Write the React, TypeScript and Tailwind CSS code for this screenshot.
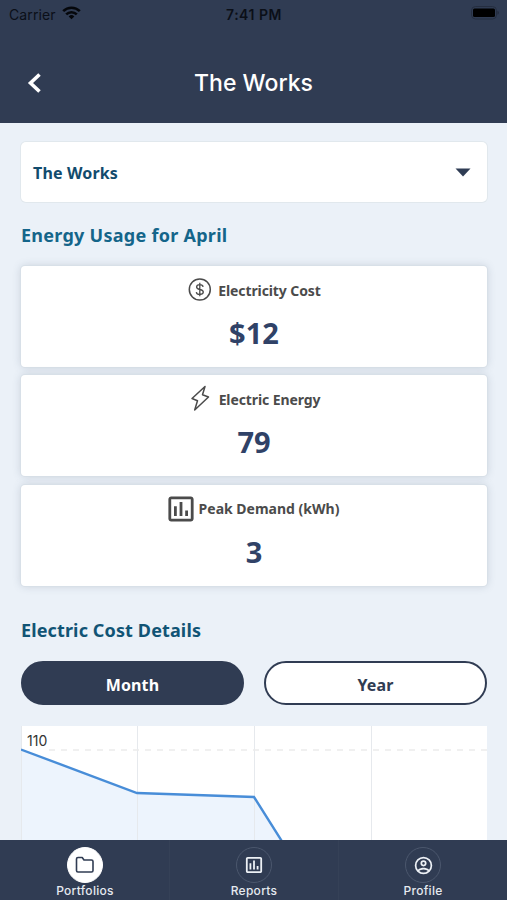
import { useState, type ReactNode } from "react";
import clsx from "clsx";

type Tab = "portfolios" | "reports" | "profile";
type Range = "month" | "year";

export default function App() {
  const [range, setRange] = useState<Range>("month");
  const [tab, setTab] = useState<Tab>("portfolios");

  return (
    <div className="flex h-[900px] w-[507px] flex-col overflow-hidden bg-[#ebf1f8] font-['Noto_Sans',sans-serif]">
      <Header title="The Works" />

      <main className="min-h-0 flex-1 overflow-hidden pt-[19px] pr-5 pl-[21px]">
        <button
          type="button"
          className="flex h-[60px] w-full items-center justify-between rounded-[5px] bg-white pt-px pr-4 pl-3 ring-1 ring-[#e1e8ed]"
        >
          <span className="text-[16px] font-bold tracking-[0.15px] text-[#114b6d]">The Works</span>
          <svg width="16" height="9" viewBox="0 0 16 9">
            <path d="M0.5 0.5h15L8 8.5z" fill="#2f3c54" />
          </svg>
        </button>

        <h2 className="mt-[19px] text-[18px] leading-7 font-bold tracking-[0.27px] text-[#14658a]">
          Energy Usage for April
        </h2>

        <div className="mt-[17px] flex flex-col gap-[8.4px]">
          <StatCard icon={<DollarIcon />} label="Electricity Cost" value="$12" />
          <StatCard icon={<BoltIcon />} label="Electric Energy" value="79" />
          <StatCard icon={<ChartBoxIcon size={28} />} label="Peak Demand (kWh)" value="3" wide />
        </div>

        <h2 className="mt-[30.2px] text-[18px] leading-7 font-bold tracking-[0.13px] text-[#115475]">
          Electric Cost Details
        </h2>

        <div className="mt-[17px] flex gap-5">
          <RangeButton active={range === "month"} onClick={() => setRange("month")}>
            Month
          </RangeButton>
          <RangeButton active={range === "year"} onClick={() => setRange("year")}>
            Year
          </RangeButton>
        </div>

        <CostChart />
      </main>

      <nav className="flex h-[60px] shrink-0 bg-[#303c53]">
        <NavItem label="Portfolios" active={tab === "portfolios"} onClick={() => setTab("portfolios")}>
          <FolderIcon />
        </NavItem>
        <NavItem label="Reports" active={tab === "reports"} onClick={() => setTab("reports")}>
          <ChartBoxIcon size={18} />
        </NavItem>
        <NavItem label="Profile" active={tab === "profile"} onClick={() => setTab("profile")}>
          <ProfileIcon />
        </NavItem>
      </nav>
    </div>
  );
}

function Header({ title }: { title: string }) {
  return (
    <header className="h-[123px] shrink-0 bg-[#303c53] font-['Inter',sans-serif]">
      <div className="grid h-7 grid-cols-3 items-center pr-2 pl-[9px] text-[14px] text-[#0b0f18]">
        <div className="flex items-center gap-[6px]">
          <span className="tracking-[0.1px]">Carrier</span>
          <svg className="-mt-[3px]" width="19" height="14" viewBox="0 0 19 14" fill="none" stroke="#05070b" strokeWidth="2.6">
            <path d="M1.2 5.2a11.8 11.8 0 0 1 16.6 0" />
            <path d="M4.2 8.4a7.5 7.5 0 0 1 10.6 0" />
            <path d="M9.5 13.2 6.7 10.4a4 4 0 0 1 5.6 0z" fill="#05070b" stroke="none" />
          </svg>
        </div>
        <span className="text-center text-[14px] font-semibold tracking-[0.5px]">7:41 PM</span>
        <svg className="-mt-[3px] justify-self-end" width="28" height="14" viewBox="0 0 28 14">
          <rect x="0.5" y="0.5" width="25" height="12.5" rx="4" fill="none" stroke="#252e40" />
          <rect x="2" y="2.5" width="22" height="8.5" rx="1.5" fill="#000" />
          <path d="M26.5 4.8v4a2.200 2.200 0 0 0 0-4z" fill="#202839" />
        </svg>
      </div>
      <div className="grid h-[111px] grid-cols-[100px_1fr_100px] items-center text-white">
        <button type="button" aria-label="Back" className="-mt-px pl-[27px]">
          <svg width="15" height="20" viewBox="0 0 15 20" fill="none" stroke="currentColor" strokeWidth="3.6">
            <path d="M12.500 1.500 3.500 10l9 8.500" />
          </svg>
        </button>
        <h1 className="text-center text-[23px] font-medium">{title}</h1>
      </div>
    </header>
  );
}

function StatCard({ icon, label, value, wide }: { icon: ReactNode; label: string; value: string; wide?: boolean }) {
  return (
    <section className="flex h-[101px] flex-col items-center rounded-[4px] bg-white pt-[9px] shadow-[0_0_8px_rgba(70,85,110,0.22)] ring-1 ring-[#d8e0e8]">
      <div className={clsx("flex h-[30px] items-center", wide ? "gap-1 pr-[2px]" : "gap-1")}>
        {icon}
        <span className={clsx("text-[14px] font-bold text-[#4b4b4b]", !wide && "tracking-[-0.1px]")}>{label}</span>
      </div>
      <div className="mt-2 text-[29px] leading-10 font-bold text-[#304267]">{value}</div>
    </section>
  );
}

function RangeButton({ active, onClick, children }: { active: boolean; onClick: () => void; children: ReactNode }) {
  return (
    <button
      type="button"
      onClick={onClick}
      className={clsx(
        "h-11 flex-1 rounded-full border-2 border-[#303c53] pt-1 text-[16px] font-bold tracking-[0.1px]",
        active ? "bg-[#303c53] text-white" : "bg-white text-[#303c53]",
      )}
    >
      {children}
    </button>
  );
}

function CostChart() {
  return (
    <svg className="mt-[21px] block bg-white" width="466" height="174" viewBox="0 0 466 174">
      <path d="M0 23.5 116 67 233 71 298 174H0z" fill="#edf4fd" />
      <path d="M0.5 0v174M116.5 0v174M233.5 0v174M350.5 0v174" stroke="#e6e9ed" />
      <path d="M28 24H466" stroke="#ebebeb" strokeWidth="1.5" strokeDasharray="6 6" />
      <path d="M0 23.5 116 67 233 71 298 174" fill="none" stroke="#488dd8" strokeWidth="2.4" />
      <text x="6" y="20" fontSize="14" fill="#333" className="font-['Inter',sans-serif]">
        110
      </text>
    </svg>
  );
}

function NavItem({
  label,
  active,
  onClick,
  children,
}: {
  label: string;
  active: boolean;
  onClick: () => void;
  children: ReactNode;
}) {
  return (
    <button
      type="button"
      onClick={onClick}
      className="flex flex-1 flex-col items-center border-l border-[#354157] pt-[7px] first:border-l-0 first:pl-px"
    >
      <span
        className={clsx(
          "flex size-9 items-center justify-center rounded-full border",
          active ? "border-white bg-white text-[#303c53]" : "border-[#4b576d] text-[#edf1f6]",
        )}
      >
        {children}
      </span>
      <span className="font-['Inter',sans-serif] text-[12px] leading-4 font-medium tracking-[0.3px] text-[#e6eaf0]">
        {label}
      </span>
    </button>
  );
}

function DollarIcon() {
  return (
    <svg width="27" height="26" viewBox="0 0 27 26" fill="none" stroke="#4b4b4b" strokeWidth="1.5">
      <circle cx="12.8" cy="12.5" r="10.500" />
      <path
        d="M16.100 9.800c-.2-1.400-1.400-2.200-3.300-2.200-1.800 0-3.200.9-3.200 2.300 0 3.500 6.700 1.700 6.700 5.200 0 1.500-1.400 2.400-3.400 2.400s-3.400-.9-3.600-2.400M12.800 5.700v13.600"
        strokeWidth="1.3"
      />
    </svg>
  );
}

function BoltIcon() {
  return (
    <svg width="27" height="28" viewBox="0 0 27 28" fill="none" stroke="#4b4b4b" strokeWidth="1.5" strokeLinejoin="round">
      <path d="M17 1.500 4 13.500l5.500 2.300L6.700 25 20.500 12l-6-2.300z" />
    </svg>
  );
}

function ChartBoxIcon({ size }: { size: number }) {
  return (
    <svg width={size} height={size} viewBox="2 2 20 20" className="text-[#4b4b4b] [nav_&]:text-inherit" fill="currentColor">
      <path d="M19 3H5c-1.100 0-2 .9-2 2v14c0 1.100.9 2 2 2h14c1.100 0 2-.9 2-2V5c0-1.100-.9-2-2-2zm0 16H5V5h14v14zM7 10h2v7H7zm4-3h2v10h-2zm4 6h2v4h-2z" />
    </svg>
  );
}

function FolderIcon() {
  return (
    <svg width="20" height="18" viewBox="0 0 20 18" fill="none" stroke="currentColor" strokeWidth="1.6" strokeLinejoin="round">
      <path d="M1.500 14.500V3q0-1.500 1.500-1.500h4.200L9 4h7.500Q18 4 18 5.500v9q0 1.500-1.500 1.500H3q-1.500 0-1.500-1.500z" />
    </svg>
  );
}

function ProfileIcon() {
  return (
    <svg width="21" height="21" viewBox="0 0 24 24" fill="currentColor">
      <path d="M12 2a10 10 0 1 0 0 20 10 10 0 0 0 0-20M7.070 18.280c.43-.9 3.050-1.780 4.930-1.780s4.500.88 4.930 1.780A7.900 7.900 0 0 1 12 20a7.900 7.900 0 0 1-4.930-1.720m11.290-1.450C16.930 15.090 13.460 14.500 12 14.500s-4.930.59-6.360 2.330A7.900 7.900 0 0 1 4 12a8 8 0 0 1 16 0c0 1.820-.62 3.500-1.640 4.830M12 6a3.500 3.500 0 1 0 0 7 3.500 3.500 0 0 0 0-7m0 5a1.500 1.500 0 1 1 0-3 1.500 1.500 0 0 1 0 3" />
    </svg>
  );
}
